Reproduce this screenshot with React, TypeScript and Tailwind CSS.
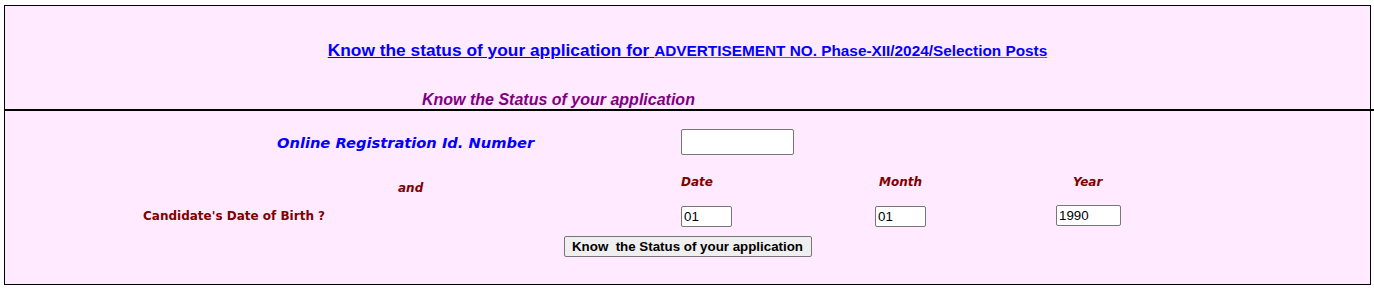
import React from "react";

const verdana = { fontFamily: '"DejaVu Sans", Verdana, sans-serif' };

const StatusForm: React.FC = () => {
  return (
    <div className="h-[303px] bg-white pl-[4px] pt-[5px] font-['Liberation_Sans',Arial,sans-serif]">
      <div className="flex h-[280px] w-[1367px] flex-col border border-black bg-[#ffeaff]">
        {/* Heading */}
        <div className="flex h-[103px] flex-col">
          <div className="mt-[34px] text-center font-bold leading-[20px] text-[#0000ff]">
            <a href="#" className="text-[#0000ff]">
              <span className="text-[17.33px] underline decoration-[#0000ff]">
                Know the status of your application for{" "}
              </span>
              <span className="text-[15.35px] underline decoration-[#9b30ff]">
                ADVERTISEMENT NO. Phase-XII/2024/Selection Posts
              </span>
            </a>
          </div>
          <div className="mt-[30px] pl-[417px] text-[16px] font-bold italic leading-[18px] text-[#800080]">
            Know the Status of your application
          </div>
        </div>

        <div className="mr-[-5px] h-[2px] shrink-0 bg-black" />

        {/* Form */}
        <div className="flex flex-col">
          <div className="mt-[18px] flex h-[26px] items-center">
            <div
              className="w-[676px] shrink-0 pl-[272px] pt-[2px] text-[14.67px] font-bold italic text-[#0000ff]"
              style={verdana}
            >
              Online Registration Id. Number
            </div>
            <input
              type="text"
              className="h-[26px] w-[113px] rounded-[2px] border border-[#767676] bg-white px-[2px] text-[13.33px] outline-none"
            />
          </div>

          <div
            className="mt-[17px] flex h-[20px] text-[12px] font-bold italic leading-[20px] text-[#800000]"
            style={verdana}
          >
            <div className="w-[676px] shrink-0 pl-[393px] pt-[6px]">and</div>
            <div className="w-[198px] shrink-0">Date</div>
            <div className="w-[194px] shrink-0">Month</div>
            <div>Year</div>
          </div>

          <div className="mt-[13px] flex h-[21px] items-center">
            <div
              className="w-[676px] shrink-0 pl-[138px] text-[12px] font-bold text-[#800000]"
              style={verdana}
            >
              Candidate's Date of Birth ?
            </div>
            <div className="w-[194px] shrink-0">
              <input
                type="text"
                defaultValue="01"
                className="h-[21px] w-[51px] rounded-[2px] border border-[#767676] bg-white px-[2px] text-[13.33px] text-black outline-none"
              />
            </div>
            <div className="w-[181px] shrink-0">
              <input
                type="text"
                defaultValue="01"
                className="h-[21px] w-[51px] rounded-[2px] border border-[#767676] bg-white px-[2px] text-[13.33px] text-black outline-none"
              />
            </div>
            <input
              type="text"
              defaultValue="1990"
              className="h-[21px] w-[65px] rounded-[2px] border border-[#767676] bg-white px-[2px] text-[13.33px] text-black outline-none"
            />
          </div>

          <div className="mt-[10px] flex justify-center">
            <button
              type="button"
              className="h-[21px] w-[248px] whitespace-pre rounded-[2px] border border-[#767676] bg-[#efefef] text-center text-[13.33px] font-bold leading-[19px] text-black"
            >
              Know  the Status of your application
            </button>
          </div>
        </div>
      </div>
    </div>
  );
};

export default function App() {
  return <StatusForm />;
}
